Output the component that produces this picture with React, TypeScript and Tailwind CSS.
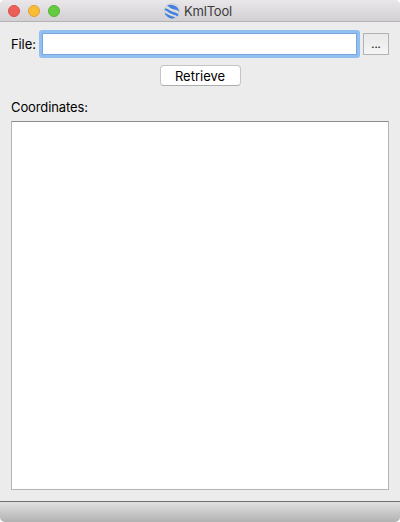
function EarthIcon() {
  return (
    <svg width="16" height="16" viewBox="0 0 16 16" className="shrink-0">
      <defs>
        <clipPath id="globe">
          <circle cx="8" cy="8" r="7.7" />
        </clipPath>
      </defs>
      <circle cx="8" cy="8" r="7.5" fill="#dadadc" stroke="#c4c6ca" strokeWidth=".5" />
      <g clipPath="url(#globe)" fill="#3f80e2">
        <path d="M3 2.700C6 .9 11.500 2 14 5.500L15.600 9.200C13 6.400 10.500 6.700 7.500 5.500 5.500 4.600 4.700 3.100 3 2.700Z" />
        <path d="M.4 5.600C3.300 4.800 5 7.300 8.500 8.800 11 9.800 12.800 9.700 14.800 11.700L13.200 13.500C11.200 11.600 8.500 11.700 6 10.300 3.600 9 2.500 7.300.4 7.200Z" />
        <path d="M.7 10.300C3 10.100 5.200 13 9.300 13.600L11.500 14.800 8 16 4.500 14.600C3.200 13.500 2 12 .7 11.500Z" />
      </g>
    </svg>
  );
}

export default function App() {
  return (
    <div className="h-[522px] w-[400px] bg-white font-['Inter','Liberation_Sans',sans-serif] text-black">
      <div className="flex h-full flex-col overflow-hidden rounded-[5px] bg-[#ececec]">
        <header className="relative flex h-[22px] shrink-0 items-center justify-center border-b border-[#b4b2b4] bg-linear-to-b from-[#e9e7e9] to-[#d2d0d2]">
          <div className="absolute left-2 top-[5px] flex gap-2">
            <span className="size-3 rounded-full border border-[#dc4d49] bg-[#ed5f59]" />
            <span className="size-3 rounded-full border border-[#e0a033] bg-[#f8bd35]" />
            <span className="size-3 rounded-full border border-[#55b039] bg-[#65cb40]" />
          </div>
          <div className="mr-1 flex items-center gap-1 pt-px">
            <EarthIcon />
            <h1 className="w-12 whitespace-nowrap text-[13px] leading-4 tracking-[-0.2px] text-[#3c3b3c]">KmlTool</h1>
          </div>
        </header>
        <main className="flex min-h-0 flex-1 flex-col px-[11px] pb-[11px] pt-[8px]">
          <div className="flex h-[28px] items-center">
            <label htmlFor="file" className="w-[28px] whitespace-nowrap text-[13px] leading-4 tracking-[-0.1px]">File:</label>
            <input id="file" className="h-[28px] w-[321px] rounded-[3px] border-[3px] border-[#91bff1] bg-white px-1 text-[13px] shadow-[inset_0_0_0_1px_#78a7df] outline-none" />
            <button className="ml-[3px] flex h-[22px] w-[26px] items-center justify-center border border-[#b2b2b2] bg-linear-to-b from-[#e9e9e9] to-[#f5f5f5] text-[11px] leading-3">...</button>
          </div>
          <button className="mx-auto mt-[7px] h-[21px] w-[81px] rounded-[4px] border border-[#c5c5c5] border-b-[#aeaeae] bg-white text-[13px] leading-[18px]">Retrieve</button>
          <label htmlFor="coordinates" className="mt-[13px] h-4 text-[13px] leading-4 tracking-[-0.1px]">Coordinates:</label>
          <textarea id="coordinates" className="mt-[6px] min-h-0 flex-1 resize-none border border-[#b4b4b4] border-t-[#8c8c8c] bg-white p-1 text-[13px] outline-none" />
        </main>
        <footer className="h-[21px] shrink-0 border-t border-[#707070] bg-linear-to-b from-[#e1e1e1] to-[#b2b2b2]" />
      </div>
    </div>
  );
}
